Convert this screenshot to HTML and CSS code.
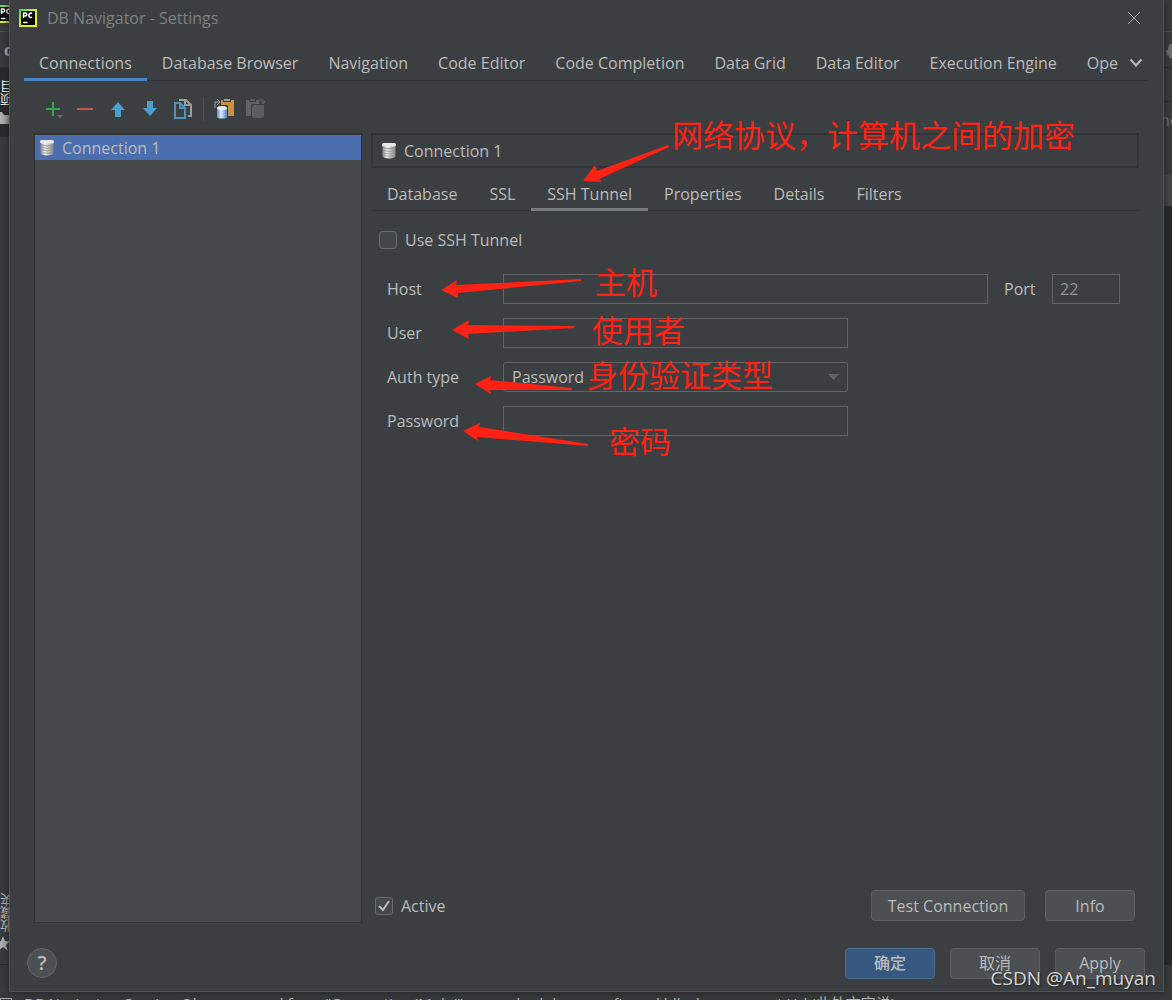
FILE: index.html
```html
<!DOCTYPE html>
<html lang="zh-CN">
<head>
<meta charset="utf-8">
<title>DB Navigator - Settings</title>
<meta name="viewport" content="width=device-width, initial-scale=1">
<link rel="stylesheet" href="styles.css">
</head>
<body>
<svg width="0" height="0" class="defs" aria-hidden="true">
  <defs>
    <linearGradient id="pcg" x1="0" y1="0" x2="1" y2="1">
      <stop offset="0" stop-color="#21d759"/><stop offset=".4" stop-color="#c8e83a"/><stop offset="1" stop-color="#f4ee20"/>
    </linearGradient>
    <linearGradient id="cyl" x1="0" x2="1" y1="0" y2="0">
      <stop offset="0" stop-color="#8c8c8c"/><stop offset=".35" stop-color="#f4f4f4"/><stop offset="1" stop-color="#858585"/>
    </linearGradient>
    <linearGradient id="blue" x1="0" x2="1" y1="0" y2="0">
      <stop offset="0" stop-color="#5c8fd0"/><stop offset=".4" stop-color="#d9e8fa"/><stop offset="1" stop-color="#5285c8"/>
    </linearGradient>
    <symbol id="i-pc" viewBox="0 0 18 18">
      <rect width="18" height="18" fill="url(#pcg)"/><rect x="2" y="2" width="14" height="14" fill="#050505"/>
      <path d="M4.500 9V4h1.800a1.500 1.500 0 0 1 0 3H4.500M13 4.700a2 2.100 0 1 0 0 3.300M4 13.500h4.500" fill="none" stroke="#fff" stroke-width="1.500"/>
    </symbol>
    <symbol id="i-db" viewBox="0 0 16 17">
      <path d="M1.500 3v11.500c1 2.500 12 2.500 13 0V3z" fill="url(#cyl)"/>
      <path d="M2 6q6 1.500 12 0M2 8.500q6 1.500 12 0M2 11q6 1.500 12 0M2 13.500q6 1.500 12 0" fill="none" stroke="#8a8a8a" stroke-width=".8"/>
      <rect x="1" y="1" width="14" height="3.500" rx="1.700" fill="#e8e8e8"/>
    </symbol>
  </defs>
</svg>
<div class="desktop">
  <aside class="strip strip-left">
    <div class="seg seg-title"><svg class="pc" width="18" height="18"><use href="#i-pc"/></svg></div>
    <div class="seg seg-crumb"><b>c</b></div>
    <div class="seg seg-project"><span class="vtext">项目</span>
      <svg width="9" height="12" viewBox="0 0 9 12"><path d="M0 0h2l2 3h5v9H0z" fill="#aeb0b2"/></svg></div>
    <div class="seg seg-side"><span class="vtext">收藏夹</span>
      <svg width="9" height="16" viewBox="0 0 9 16"><path d="M3 0l2 5h5l-4 4 2 6-5-4-5 4 2-6-4-4h5z" fill="#afb1b3"/></svg></div>
    <div class="seg seg-foot"></div>
  </aside>

  <main class="dialog">
    <header class="titlebar">
      <svg width="18" height="18"><use href="#i-pc"/></svg>
      <h1>DB Navigator - Settings</h1>
      <button class="plain close" aria-label="Close"><svg width="14" height="14" viewBox="0 0 14 14"><path d="M1 1l12 12M13 1L1 13" stroke="#a4a6a7" fill="none"/></svg></button>
    </header>
    <nav class="tabs main-tabs">
      <button class="tab active">Connections</button>
      <button class="tab">Database Browser</button>
      <button class="tab">Navigation</button>
      <button class="tab">Code Editor</button>
      <button class="tab">Code Completion</button>
      <button class="tab">Data Grid</button>
      <button class="tab">Data Editor</button>
      <button class="tab">Execution Engine</button>
      <button class="tab last">Ope</button>
      <button class="plain more" aria-label="More tabs"><svg width="14" height="10" viewBox="0 0 14 10"><path d="M1.500 1.500L7 7.500l5.500-6" fill="none" stroke="#bbb" stroke-width="2"/></svg></button>
    </nav>
    <div class="toolbar">
      <button class="plain" aria-label="Add"><svg width="20" height="20" viewBox="0 0 20 20"><path d="M9 3v14M2 10h14" stroke="#35a44c" stroke-width="2"/><path d="M13 16h6l-3 3z" fill="#6e6e6e"/></svg></button>
      <button class="plain" aria-label="Remove"><svg width="20" height="20" viewBox="0 0 20 20"><path d="M1 10h16" stroke="#c75450" stroke-width="2"/></svg></button>
      <button class="plain" aria-label="Move up"><svg width="20" height="20" viewBox="0 0 20 20"><path d="M10 3l7 8h-4v7H7v-7H3z" fill="#4a9fcb"/></svg></button>
      <button class="plain" aria-label="Move down"><svg width="20" height="20" viewBox="0 0 20 20"><path d="M10 17l7-8h-4V2H7v7H3z" fill="#4a9fcb"/></svg></button>
      <button class="plain" aria-label="Duplicate"><svg width="20" height="20" viewBox="0 0 20 20"><path d="M7 1h7l5 5v11h-3M13 1v5h5" fill="none" stroke="#9a9c9e" stroke-width="2"/><path d="M3 4h5l5 5v10H3zM8 4v5h5" fill="#3c3f41" stroke="#4a94bd" stroke-width="2"/></svg></button>
      <span class="sep"></span>
      <button class="plain" aria-label="Paste connection"><svg width="20" height="20" viewBox="0 0 20 20"><path d="M7 1h2v2h8V1h3v16h-6V6H7z" fill="#c98f45"/><path d="M10 0h6v2h-6z" fill="#9a9c9e"/><path d="M1 9V3h4M3 0l3 3-3 3" fill="none" stroke="#9a9c9e"/><path d="M3 9v9c0 2 10 2 10 0V9z" fill="url(#blue)"/><ellipse cx="8" cy="9" rx="5" ry="2" fill="#e4eefb"/></svg></button>
      <button class="plain" aria-label="Import connection"><svg width="20" height="20" viewBox="0 0 20 20"><path d="M0 1h3v2h7V1h3v4H5v12H0z" fill="#606263"/><path d="M4 0h5v2H4zM6 8l2-2h10v11q0 2-2 2H8q-2 0-2-2z" fill="#5b5d5e"/><path d="M13 1h4v3M15 2l2 3 2-3" fill="none" stroke="#606263"/></svg></button>
    </div>

    <div class="workspace">
      <ul class="tree"><li class="selected"><svg width="16" height="17"><use href="#i-db"/></svg>Connection 1</li></ul>
      <section class="detail">
        <div class="detail-head"><svg width="16" height="17"><use href="#i-db"/></svg>Connection 1</div>
        <nav class="tabs sub-tabs">
          <button class="tab">Database</button>
          <button class="tab">SSL</button>
          <button class="tab active">SSH Tunnel</button>
          <button class="tab">Properties</button>
          <button class="tab">Details</button>
          <button class="tab">Filters</button>
        </nav>
        <form class="form">
          <label class="check"><input type="checkbox">Use SSH Tunnel</label>
          <div class="row"><label for="host">Host</label><input id="host" class="field grow" type="text"><label class="port" for="port">Port</label><input id="port" class="field short" type="text" value="22"></div>
          <div class="row"><label for="user">User</label><input id="user" class="field" type="text"></div>
          <div class="row"><label for="auth">Auth type</label><select id="auth" class="field"><option>Password</option></select></div>
          <div class="row"><label for="pass">Password</label><input id="pass" class="field" type="password"></div>
        </form>
        <div class="detail-foot">
          <label class="check"><input type="checkbox" checked>Active</label>
          <button class="btn wide">Test Connection</button>
          <button class="btn">Info</button>
        </div>
      </section>
    </div>

    <footer class="actions">
      <button class="help" aria-label="Help">?</button>
      <button class="btn primary">确定</button>
      <button class="btn">取消</button>
      <button class="btn">Apply</button>
    </footer>
  </main>

  <aside class="strip strip-right">
    <div class="seg seg-title"></div>
    <div class="seg seg-crumb"><svg width="6" height="14" viewBox="0 0 6 14"><path d="M3 0h3v14H3v-3H1V9H0V6h2V3h1z" fill="#6f7274"/></svg></div>
    <div class="seg seg-blank"></div>
    <div class="seg seg-ne">ne</div>
    <div class="seg seg-light"></div>
    <div class="seg seg-dark"></div>
    <div class="seg seg-foot"></div>
  </aside>

  <div class="status"><span class="status-box"></span>DB Navigator: Session Observer used from "Connection 'Mulu'" over schedule as confirmed hll where you set Url (此处文字说)</div>

  <div class="notes">
    <svg class="arrows" width="700" height="460" viewBox="0 0 700 460" fill="#ff2114">
      <path d="M583 181L595 165L597 171L668 145L669 147L599 179L602 182z"/>
      <path d="M441 290L457 280L456 285L581 279L581 281L458 293L458 298z"/>
      <path d="M452 330L469 320L468 325L574 326L574 328L468 334L469 339z"/>
      <path d="M475 384L491 376L490 380L572 388L572 390L490 390L491 394z"/>
      <path d="M463 431L480 423L479 427L588 444L588 446L477 437L478 441z"/>
    </svg>
    <span class="note n1">网络协议，计算机之间的加密</span>
    <span class="note n2">主机</span>
    <span class="note n3">使用者</span>
    <span class="note n4">身份验证类型</span>
    <span class="note n5">密码</span>
    <span class="watermark">CSDN @An_muyan</span>
  </div>
</div>
</body>
</html>
```
FILE: styles.css
```css
* { box-sizing: border-box; }
body {
  margin: 0;
  background: #3c3f41;
  color: #bbbbbb;
  font: 16px/24px "Open Sans", "Noto Sans CJK SC", sans-serif;
}
button, input, select { font: inherit; color: inherit; margin: 0; }
.defs { position: absolute; }
.desktop {
  position: relative;
  display: grid;
  grid-template-columns: 9px minmax(0, 1fr) 8px;
  grid-template-rows: minmax(0, 1fr) 8px;
  height: 100vh;
  min-height: 700px;
  overflow: hidden;
}
.plain { display: flex; padding: 0; border: 0; background: none; }

/* Slices of the editor window behind the dialog */
.strip { display: flex; flex-direction: column; overflow: hidden; background: #393c3e; }
.seg { flex: none; overflow: hidden; }
.seg svg { display: block; }
.seg-title { height: 32px; padding-top: 5px; border-bottom: 1px solid #505253; }
.strip-left .pc { margin-left: -3px; }
.seg-crumb { height: 36px; padding: 6px 0 0 4px; border-bottom: 1px solid #2b2b2b; }
.strip-right .seg-crumb { padding: 12px 0 0 2px; }
.seg-project { height: 69px; padding-top: 12px; background: #292a2b; color: #fff; }
.vtext { display: block; width: 9px; writing-mode: vertical-rl; transform: rotate(180deg); font-size: 13px; line-height: 14px; }
.seg-project svg { margin-top: 6px; }
.seg-side { flex: 1; display: flex; flex-direction: column; justify-content: flex-end; gap: 4px; padding-bottom: 12px; }
.seg-foot { height: 28px; border-top: 1px solid #2b2b2b; }
.seg-blank { height: 34px; border-bottom: 1px solid #2b2b2b; }
.seg-ne { height: 73px; padding-top: 6px; color: #777; text-indent: -4px; }
.seg-light { height: 31px; background: #45494b; }
.seg-dark { flex: 1; background: #282828; }
.status {
  grid-column: 1 / -1;
  display: flex;
  gap: 12px;
  height: 8px;
  padding-top: 1px;
  overflow: hidden;
  white-space: nowrap;
  background: #37393b;
  font-size: 15px;
  line-height: 20px;
}
.status-box { width: 12px; height: 12px; margin-top: 5px; border: 1px solid #aaa; }

/* Dialog */
.dialog {
  display: flex;
  flex-direction: column;
  border: solid #515455;
  border-width: 0 1px 1px;
  background: #3c3f41;
  box-shadow: 0 0 8px #202020;
  z-index: 1;
}
.titlebar { display: flex; align-items: center; gap: 10px; height: 36px; padding: 0 22px 0 9px; color: #7e8081; }
.titlebar h1 { flex: 1; margin: 0; font: inherit; }
.tabs { display: flex; border-bottom: 1px solid #323435; }
.tab { flex: none; padding: 4px 16px 0; border: 0; border-bottom: 3px solid transparent; background: none; margin-bottom: -1px; white-space: nowrap; }
.main-tabs { height: 45px; margin: 0 15px 0 14px; padding-top: 8px; }
.main-tabs .tab { padding: 4px 15px 0; }
.main-tabs .active { border-color: #4a88c7; }
.main-tabs .last { padding-right: 0; }
.more { align-items: center; padding: 2px 0 0 11px; }
.toolbar { display: flex; align-items: center; gap: 12px; height: 52px; padding: 4px 0 0 34px; }
.sep { width: 1px; height: 24px; background: #515456; margin: 0 -2px 0 -1px; }
.workspace { flex: 1; display: flex; gap: 9px; min-height: 0; padding: 0 24px 0 24px; }
.tree { flex: 0 0 328px; margin: 0; padding: 0; list-style: none; border: solid #313335; border-width: 2px 1px 1px; background: #454949; }
.tree li { display: flex; align-items: center; gap: 7px; height: 25px; padding-left: 4px; }
.selected { background: #4b6eaf; }
.detail { flex: 1; display: flex; flex-direction: column; min-width: 0; }
.detail-head { display: flex; align-items: center; gap: 7px; height: 35px; padding-left: 8px; border: 2px solid #323435; }
.sub-tabs { height: 43px; padding-top: 8px; }
.sub-tabs .active { border-color: #747a80; }
.form { flex: 1; display: flex; flex-direction: column; gap: 14px; padding: 17px 19px 0 8px; }
.check { display: flex; align-items: center; gap: 8px; }
.form .check { margin-bottom: 8px; }
.check input { appearance: none; width: 18px; height: 18px; border: 1px solid #6b6b6b; border-radius: 3px; background: #43494a; }
.check input:checked { background: #43494a url("data:image/svg+xml,%3Csvg xmlns='http://www.w3.org/2000/svg' viewBox='0 0 16 16'%3E%3Cpath d='M3 8l4 4 6-9' fill='none' stroke='%23bbb' stroke-width='2'/%3E%3C/svg%3E"); }
.row { display: flex; align-items: center; padding-left: 8px; }
.row label { flex: 0 0 116px; }
.row .port { flex: 0 0 64px; padding-left: 16px; }
.field { width: 345px; height: 30px; padding: 0 7px; border: 1px solid #646464; border-radius: 0; outline: 0; background: #3c3f41; }
.field.grow { flex: 1; min-width: 0; }
.field.short { width: 68px; color: #8f9192; }
select.field { appearance: none; padding: 0 8px; border-radius: 3px; background: #3c3f41 url("data:image/svg+xml,%3Csvg xmlns='http://www.w3.org/2000/svg' width='11' height='6'%3E%3Cpath d='M0 0h11L5.5 6z' fill='%23606263'/%3E%3C/svg%3E") no-repeat right 8px center; }
.detail-foot { display: flex; align-items: center; gap: 20px; padding: 0 4px 2px; }
.detail-foot .check { flex: 1; }
.btn { width: 90px; height: 31px; padding: 0; border: 1px solid #5e6060; border-radius: 4px; background: #4c5052; white-space: nowrap; }
.btn.wide { width: 154px; }
.btn.primary { border-color: #4c708c; background: #365880; font-weight: 500; }
.actions { display: flex; align-items: center; gap: 15px; height: 68px; padding: 12px 18px 0 17px; }
.help { width: 30px; height: 30px; margin-right: auto; padding: 0; border: 1px solid #646768; border-radius: 50%; background: #4c5052; font-size: 20px; font-weight: 600; }

/* Hand-written callouts over the window */
.notes { position: absolute; inset: 0; z-index: 2; pointer-events: none; }
.arrows { position: absolute; left: 0; top: 0; }
.note { position: absolute; color: #ff2114; font: 400 31px/40px "Noto Sans CJK SC", sans-serif; white-space: nowrap; }
.n1 { left: 672px; top: 114px; }
.n2 { left: 595px; top: 261px; }
.n3 { left: 592px; top: 309px; }
.n4 { left: 587px; top: 354px; }
.n5 { left: 609px; top: 420px; }
.watermark { position: absolute; right: 16px; bottom: 8px; color: #d6d6d6; font-size: 19px; line-height: 28px; text-shadow: 1px 1px 2px #222; }
```
